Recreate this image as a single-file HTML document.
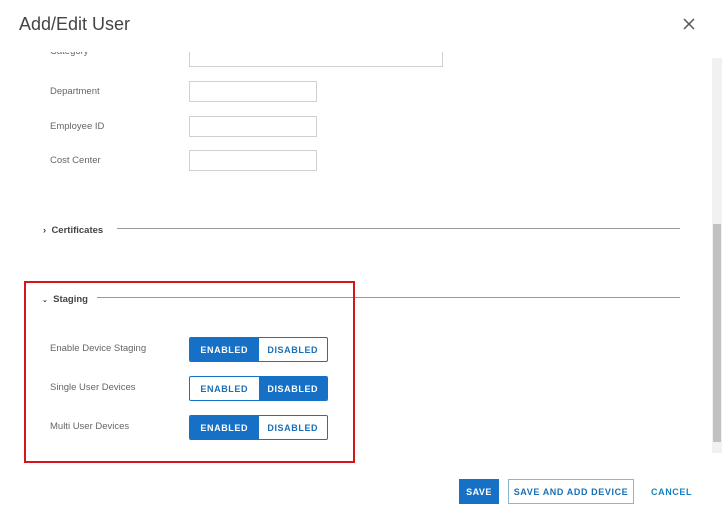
<!DOCTYPE html>
<html><head><style>
*{box-sizing:border-box;margin:0;padding:0}
body{width:723px;height:524px;background:#fff;font-family:"Liberation Sans",sans-serif;position:relative;overflow:hidden;color:#555}
.a{position:absolute}
.lbl{font-size:9.5px;color:#666}
.inp{position:absolute;border:1px solid #d0d0d0;background:#fff}
.tg{position:absolute;left:189px;width:139px;height:25px;border:1px solid #1473c7;display:flex;font-size:9px;font-weight:bold;letter-spacing:.6px;border-radius:2px;overflow:hidden}
.tg div{flex:1;display:flex;align-items:center;justify-content:center;color:#1a6fb5}
.tg .on{background:#1570c6;color:#fff}
.hr{position:absolute;height:1px;background:#999}
</style></head><body>
<div class="a" style="left:19px;top:14px;font-size:18px;color:#444">Add/Edit User</div>
<svg class="a" style="left:683px;top:18px" width="12" height="12"><path d="M1 1L11 11M11 1L1 11" stroke="#555" stroke-width="1.5"/></svg>
<div class="a" style="left:50px;top:52px;height:8px;overflow:hidden"><div class="lbl" style="margin-top:-6px">Category</div></div>
<div class="inp" style="left:189px;top:52px;width:254px;height:15px;border-top:none"></div>
<div class="a lbl" style="left:50px;top:86px">Department</div>
<div class="inp" style="left:189px;top:81px;width:128px;height:21px"></div>
<div class="a lbl" style="left:50px;top:121px">Employee ID</div>
<div class="inp" style="left:189px;top:116px;width:128px;height:21px"></div>
<div class="a lbl" style="left:50px;top:155px">Cost Center</div>
<div class="inp" style="left:189px;top:150px;width:128px;height:21px"></div>
<div class="a" style="left:43px;top:225px;font-size:9.5px;color:#444;font-weight:bold">›&nbsp; Certificates</div>
<div class="hr" style="left:117px;top:228px;width:563px"></div>
<div class="a" style="left:42px;top:294px;font-size:9.5px;color:#444;font-weight:bold"><span style="font-size:7px">⌄</span>&nbsp; Staging</div>
<div class="hr" style="left:97px;top:297px;width:583px"></div>
<div class="a lbl" style="left:50px;top:343px">Enable Device Staging</div>
<div class="tg" style="top:337px"><div class="on">ENABLED</div><div>DISABLED</div></div>
<div class="a lbl" style="left:50px;top:382px">Single User Devices</div>
<div class="tg" style="top:376px"><div>ENABLED</div><div class="on">DISABLED</div></div>
<div class="a lbl" style="left:50px;top:421px">Multi User Devices</div>
<div class="tg" style="top:415px"><div class="on">ENABLED</div><div>DISABLED</div></div>
<div class="a" style="left:24px;top:281px;width:331px;height:182px;border:2px solid #d4161c"></div>
<div class="a" style="left:712px;top:58px;width:10px;height:395px;background:#f1f1f1"></div>
<div class="a" style="left:713px;top:224px;width:8px;height:218px;background:#c1c1c1"></div>
<div class="a" style="left:459px;top:479px;width:40px;height:25px;background:#1570c6;color:#fff;font-size:9px;font-weight:bold;display:flex;align-items:center;justify-content:center;letter-spacing:.5px">SAVE</div>
<div class="a" style="left:508px;top:479px;width:126px;height:25px;border:1px solid #8ab6d6;color:#1a6fb5;font-size:9px;font-weight:bold;display:flex;align-items:center;justify-content:center;letter-spacing:.6px">SAVE AND ADD DEVICE</div>
<div class="a" style="left:651px;top:487px;color:#1a7fbf;font-size:9px;font-weight:bold;letter-spacing:.6px">CANCEL</div>
</body></html>
